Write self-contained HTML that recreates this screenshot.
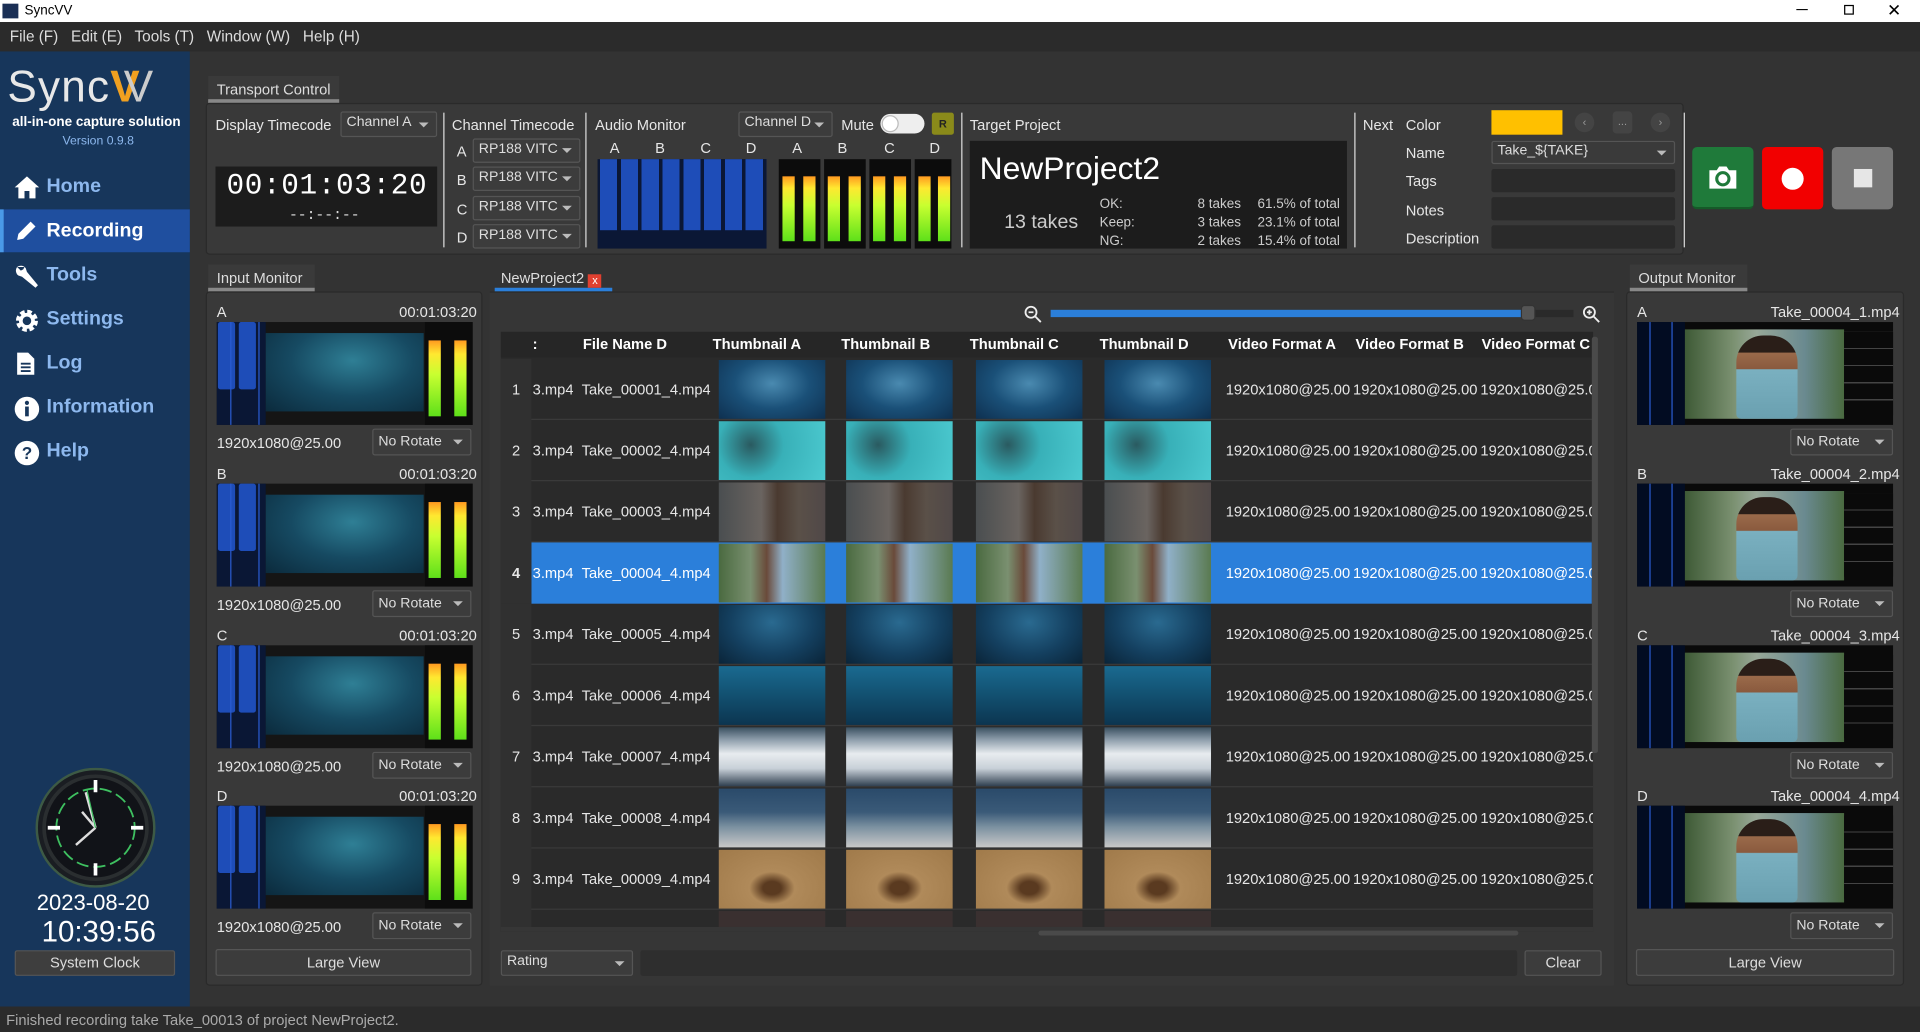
<!DOCTYPE html>
<html><head><meta charset="utf-8">
<style>
*{box-sizing:border-box;margin:0;padding:0}
html,body{width:1920px;height:1032px;overflow:hidden;background:#333}
#w{position:absolute;left:0;top:0;width:1568px;height:843px;transform:scale(1.22449);transform-origin:0 0;font-family:"Liberation Sans",sans-serif;font-size:12px;color:#e6e6e6;background:#333}
.a{position:absolute}
.t{position:absolute;white-space:nowrap}
.sel{position:absolute;background:#3c3c3c;border:1px solid #555;border-radius:2px;color:#ddd;padding:2px 4px;font-size:11.5px;white-space:nowrap;overflow:hidden}
.sel:after{content:"";position:absolute;right:6px;top:50%;margin-top:-2px;border:4px solid transparent;border-top:4px solid #bbb;border-bottom:0}
.btn{position:absolute;background:#3c3c3c;border:1px solid #555;border-radius:2px;text-align:center;color:#ddd}
.vl{position:absolute;width:1px;background:#ddd}
.panel{position:absolute;background:#393939;border:1px solid #2a2a2a;border-radius:3px}
.tab{position:absolute;background:#3a3a3a;color:#ddd;padding:4px 7px;font-size:12px;border-bottom:3px solid #888}
.nav{position:absolute;left:0;width:155px;height:36px;color:#8db8ee;font-weight:bold;font-size:16px;padding-left:38px;line-height:36px}
.nav svg{position:absolute;left:11px;top:8px}
.mon{position:absolute;width:209px;height:84px;background:#151515}
.mon .wf{position:absolute;left:0;top:0;width:40px;height:84px;background:#0a1735}
.mon .wf i{position:absolute;top:0;width:14px;height:55px;background:#1e4db8;border-radius:2px}
.mon .wf b{position:absolute;top:0;width:1px;height:84px;background:#2a5bd0}
.mon .vid{position:absolute;left:40px;top:9px;width:129px;height:64px;background:radial-gradient(ellipse at 55% 35%,#2f7f95,#164a62 50%,#0b2a3c)}
.mon .mt{position:absolute;left:170px;top:0;width:39px;height:84px;background:#0c0c0c}
.mon .mt i{position:absolute;top:15px;width:10px;height:62px;background:linear-gradient(#ff9a20,#ffe830 18%,#c8ff30 45%,#5ee01a)}
.om{position:absolute;width:209px;height:84px;background:#0a0a0a}
.om .l{position:absolute;left:0;top:0;width:39px;height:84px;background:#020c22}
.om .l b{position:absolute;width:1px;height:84px;background:#2a5bd0}
.om .m{position:absolute;left:169px;top:8px;width:40px;height:68px;background:repeating-linear-gradient(#0a0a0a 0 13px,#444 13px 14px)}
.om .img{position:absolute;left:39px;top:6px;width:130px;height:73px;background:linear-gradient(90deg,#3e5a36,#7a9070 30%,#98a898 45%,#6a8a90 75%,#4a6a40)}
.om .img:after{content:"";position:absolute;left:42px;top:5px;width:50px;height:68px;border-radius:22px 22px 4px 4px;background:linear-gradient(#2a1e18 20%,#9a6a4a 21%,#8a5a3e 40%,#7ab0c0 41%,#6aa0b0)}
.tbl{position:absolute;left:409px;top:271px;width:892px;height:490px;background:#2a2a2a;overflow:hidden}
.hd{position:absolute;top:0;height:21px;line-height:21px;font-weight:bold;color:#fff;font-size:12px}
.row{position:absolute;left:0;width:892px;height:50px;border-bottom:1px solid #3a3a3a}
.row .n{position:absolute;left:0;width:25px;height:50px;background:#303030;text-align:center;line-height:50px}
.row .c{position:absolute;top:0;height:50px;line-height:50px;font-size:12px;white-space:nowrap;overflow:hidden}
.row .th{position:absolute;top:1px;width:87px;height:48px}
.row.s .n{background:#303030;font-weight:bold}
.row.s .bg{position:absolute;left:25px;top:0;width:866px;height:50px;background:#2b7fda}
</style></head><body><div id="w">
<div class="a" style="left:0;top:0;width:1568px;height:18px;background:#fff"></div>
<div class="a" style="left:2px;top:3px;width:13px;height:12px;background:#1a2f55"></div>
<div class="t" style="left:20px;top:3px;color:#000;font-size:11px">SyncVV</div>
<div class="t" style="left:1467px;top:0;color:#000;font-size:13px">─</div>
<div class="a" style="left:1506px;top:4px;width:8px;height:8px;border:1px solid #000"></div>
<div class="t" style="left:1541px;top:0;color:#000;font-size:14px">✕</div>
<div class="a" style="left:0;top:18px;width:1568px;height:24px;background:#2b2b2b"></div>
<div class="t" style="left:8px;top:23px;font-size:12.5px;color:#ddd">File (F)&nbsp;&nbsp; Edit (E)&nbsp;&nbsp; Tools (T)&nbsp;&nbsp; Window (W)&nbsp;&nbsp; Help (H)</div>
<div class="a" style="left:0;top:42px;width:155px;height:780px;background:#17365b"></div>
<div class="t" style="left:6px;top:50px;font-size:36px;color:#e8e8e8;letter-spacing:1px">Sync<span style="color:#f0a020;font-weight:bold">V</span><span style="margin-left:-14px;color:#ccc">V</span></div>
<div class="t" style="left:10px;top:94px;font-size:11px;font-weight:bold;color:#fff">all-in-one capture solution</div>
<div class="t" style="left:51px;top:110px;font-size:10px;color:#8db8ee">Version 0.9.8</div>
<div class="a" style="left:0;top:171px;width:155px;height:35px;background:#1f4f9f"></div>
<div class="a" style="left:0;top:171px;width:3px;height:35px;background:#4a9ae8"></div>
<div class="nav" style="top:135px"><svg width="22" height="20" viewBox="0 0 22 20"><path d="M11 1 L21 10 H18 V19 H13 V13 H9 V19 H4 V10 H1 Z" fill="#fff"/></svg>Home</div>
<div class="nav" style="top:171px;color:#fff"><svg width="20" height="20" viewBox="0 0 20 20"><path d="M3 17 L4 12 L14 2 L18 6 L8 16 Z" fill="#fff"/></svg>Recording</div>
<div class="nav" style="top:207px"><svg width="22" height="22" viewBox="0 0 22 22"><path d="M3 3 a5 5 0 0 1 7 1 l1 3 l9 11 l-2 2 l-11 -9 l-3 -1 a5 5 0 0 1 -1 -7 l3 3 l2 -1 l1 -2 z" fill="#fff"/></svg>Tools</div>
<div class="nav" style="top:243px"><svg width="22" height="22" viewBox="0 0 22 22"><circle cx="11" cy="11" r="7" fill="none" stroke="#fff" stroke-width="4" stroke-dasharray="3.5 2"/><circle cx="11" cy="11" r="5" fill="none" stroke="#fff" stroke-width="3"/></svg>Settings</div>
<div class="nav" style="top:279px"><svg width="20" height="20" viewBox="0 0 20 20"><path d="M3 1 H12 L17 6 V19 H3 Z" fill="#fff"/><path d="M6 10 H14 M6 13 H14 M6 16 H14" stroke="#17365b" stroke-width="1.5"/></svg>Log</div>
<div class="nav" style="top:315px"><svg width="22" height="22" viewBox="0 0 22 22"><circle cx="11" cy="11" r="10" fill="#fff"/><rect x="9.5" y="9" width="3" height="8" fill="#17365b"/><circle cx="11" cy="6" r="1.7" fill="#17365b"/></svg>Information</div>
<div class="nav" style="top:351px"><svg width="22" height="22" viewBox="0 0 22 22"><circle cx="11" cy="11" r="10" fill="#fff"/><text x="11" y="16" text-anchor="middle" font-size="14" font-weight="bold" fill="#17365b" font-family="Liberation Sans">?</text></svg>Help</div>
<svg class="a" style="left:29px;top:627px" width="98" height="98" viewBox="0 0 98 98">
<circle cx="49" cy="49" r="48" fill="#1a1d22" stroke="#3d5a45" stroke-width="2"/>
<circle cx="49" cy="49" r="42" fill="#111318" stroke="#2a2e30" stroke-width="3"/>
<circle cx="49" cy="49" r="32" fill="none" stroke="#3ec060" stroke-width="1.5" stroke-dasharray="10 4"/>
<path d="M49 10 V20 M49 78 V88 M10 49 H20 M78 49 H88" stroke="#fff" stroke-width="3"/>
<path d="M49 49 L38 36 M49 49 L33 63 M49 49 L41 20" stroke="#ddd" stroke-width="2"/>
<path d="M49 49 L42 18" stroke="#3ec060" stroke-width="1"/>
</svg>
<div class="t" style="left:30px;top:727px;font-size:18px;color:#fff">2023-08-20</div>
<div class="t" style="left:34px;top:748px;font-size:24px;color:#fff">10:39:56</div>
<div class="btn" style="left:12px;top:776px;width:131px;height:21px;line-height:19px;background:#3e3e3e">System Clock</div>

<div class="tab" style="left:170px;top:62px;width:107px;height:22px">Transport Control</div>
<div class="panel" style="left:168px;top:84px;width:1207px;height:124px"></div>
<div class="t" style="left:176px;top:95px">Display Timecode</div>
<div class="sel" style="left:278px;top:91px;width:79px;height:21px">Channel A</div>
<div class="a" style="left:176px;top:136px;width:181px;height:49px;background:#1c1c1c"></div>
<div class="t" style="left:185px;top:139px;font-family:'Liberation Mono',monospace;font-size:24px;color:#fff;letter-spacing:0.5px">00:01:03:20</div>
<div class="t" style="left:236px;top:169px;font-family:'Liberation Mono',monospace;font-size:12px;color:#ddd">--:--:--</div>
<div class="vl" style="left:362px;top:92px;height:110px"></div>
<div class="t" style="left:369px;top:95px">Channel Timecode</div>
<div class="t" style="left:373px;top:117px">A</div><div class="sel" style="left:386px;top:113px;width:88px;height:20px">RP188 VITC</div>
<div class="t" style="left:373px;top:140px">B</div><div class="sel" style="left:386px;top:136px;width:88px;height:20px">RP188 VITC</div>
<div class="t" style="left:373px;top:164px">C</div><div class="sel" style="left:386px;top:160px;width:88px;height:20px">RP188 VITC</div>
<div class="t" style="left:373px;top:187px">D</div><div class="sel" style="left:386px;top:183px;width:88px;height:20px">RP188 VITC</div>
<div class="vl" style="left:478px;top:92px;height:110px"></div>
<div class="t" style="left:486px;top:95px">Audio Monitor</div>
<div class="sel" style="left:603px;top:91px;width:77px;height:21px">Channel D</div>
<div class="t" style="left:687px;top:95px">Mute</div>
<div class="a" style="left:719px;top:93px;width:36px;height:16px;border-radius:8px;background:#eee"></div>
<div class="a" style="left:720px;top:94px;width:14px;height:14px;border-radius:7px;background:#fff;border:1px solid #bbb"></div>
<div class="a" style="left:761px;top:92px;width:18px;height:18px;background:#8a8a1a;border-radius:2px;font-size:9px;font-weight:bold;color:#222;text-align:center;line-height:18px">R</div>
<div class="t" style="left:498px;top:114px">A</div><div class="t" style="left:535px;top:114px">B</div><div class="t" style="left:572px;top:114px">C</div><div class="t" style="left:609px;top:114px">D</div>
<div class="t" style="left:647px;top:114px">A</div><div class="t" style="left:684px;top:114px">B</div><div class="t" style="left:722px;top:114px">C</div><div class="t" style="left:759px;top:114px">D</div>
<div class="a" style="left:488px;top:130px;width:138px;height:73px;background:#0b1735"></div>
<div class="a" style="left:490px;top:130px;width:136px;height:58px;background:repeating-linear-gradient(90deg,#1e4db8 0 14px,#0b1735 14px 17px,#1e4db8 17px 31px,#0b1735 31px 34px)"></div>
<div class="a" style="left:636px;top:130px;width:34px;height:73px;background:#0c0c0c"></div>
<div class="a" style="left:673px;top:130px;width:34px;height:73px;background:#0c0c0c"></div>
<div class="a" style="left:710px;top:130px;width:34px;height:73px;background:#0c0c0c"></div>
<div class="a" style="left:747px;top:130px;width:30px;height:73px;background:#0c0c0c"></div>
<div class="a" style="left:639px;top:144px;width:10px;height:53px;background:linear-gradient(#ff9a20,#ffe830 18%,#c8ff30 45%,#5ee01a)"></div>
<div class="a" style="left:656px;top:144px;width:10px;height:53px;background:linear-gradient(#ff9a20,#ffe830 18%,#c8ff30 45%,#5ee01a)"></div>
<div class="a" style="left:676px;top:144px;width:10px;height:53px;background:linear-gradient(#ff9a20,#ffe830 18%,#c8ff30 45%,#5ee01a)"></div>
<div class="a" style="left:693px;top:144px;width:10px;height:53px;background:linear-gradient(#ff9a20,#ffe830 18%,#c8ff30 45%,#5ee01a)"></div>
<div class="a" style="left:713px;top:144px;width:10px;height:53px;background:linear-gradient(#ff9a20,#ffe830 18%,#c8ff30 45%,#5ee01a)"></div>
<div class="a" style="left:730px;top:144px;width:10px;height:53px;background:linear-gradient(#ff9a20,#ffe830 18%,#c8ff30 45%,#5ee01a)"></div>
<div class="a" style="left:750px;top:144px;width:10px;height:53px;background:linear-gradient(#ff9a20,#ffe830 18%,#c8ff30 45%,#5ee01a)"></div>
<div class="a" style="left:766px;top:144px;width:10px;height:53px;background:linear-gradient(#ff9a20,#ffe830 18%,#c8ff30 45%,#5ee01a)"></div>
<div class="vl" style="left:785px;top:92px;height:110px"></div>
<div class="t" style="left:792px;top:95px">Target Project</div>
<div class="a" style="left:792px;top:115px;width:308px;height:88px;background:#1c1c1c"></div>
<div class="t" style="left:800px;top:122px;font-size:26px;color:#fff">NewProject2</div>
<div class="t" style="left:820px;top:173px;font-size:16px;color:#ccc">13 takes</div>
<div class="t" style="left:898px;top:160px;font-size:11px;color:#ccc;line-height:15px">OK:<br>Keep:<br>NG:</div>
<div class="t" style="left:978px;top:160px;font-size:11px;color:#ccc;line-height:15px">8 takes<br>3 takes<br>2 takes</div>
<div class="t" style="left:1027px;top:160px;font-size:11px;color:#ccc;line-height:15px">61.5% of total<br>23.1% of total<br>15.4% of total</div>
<div class="vl" style="left:1106px;top:92px;height:110px"></div>
<div class="t" style="left:1113px;top:95px">Next</div>
<div class="t" style="left:1148px;top:95px">Color</div>
<div class="t" style="left:1148px;top:118px">Name</div>
<div class="t" style="left:1148px;top:141px">Tags</div>
<div class="t" style="left:1148px;top:165px">Notes</div>
<div class="t" style="left:1148px;top:188px">Description</div>
<div class="a" style="left:1218px;top:90px;width:58px;height:20px;background:#ffc000"></div>
<div class="a" style="left:1286px;top:92px;width:16px;height:16px;border-radius:8px;background:#444;color:#999;font-size:9px;text-align:center;line-height:16px">‹</div>
<div class="a" style="left:1317px;top:91px;width:16px;height:18px;border-radius:3px;background:#444;color:#999;font-size:9px;text-align:center;line-height:16px">...</div>
<div class="a" style="left:1348px;top:92px;width:16px;height:16px;border-radius:8px;background:#444;color:#999;font-size:9px;text-align:center;line-height:16px">›</div>
<div class="sel" style="left:1218px;top:115px;width:150px;height:19px;background:#3a3a3a;padding-top:1px">Take_${TAKE}</div>
<div class="a" style="left:1218px;top:138px;width:150px;height:19px;background:#2a2a2a;border-radius:2px"></div>
<div class="a" style="left:1218px;top:161px;width:150px;height:19px;background:#2a2a2a;border-radius:2px"></div>
<div class="a" style="left:1218px;top:184px;width:150px;height:19px;background:#2a2a2a;border-radius:2px"></div>
<div class="vl" style="left:1375px;top:92px;height:110px"></div>
<div class="a" style="left:1382px;top:120px;width:50px;height:51px;background:#1f7a3a;border-radius:4px;border-bottom:2px solid #155a28"></div>
<svg class="a" style="left:1394px;top:134px" width="26" height="22" viewBox="0 0 26 22"><path d="M2 5 H8 L10 2 H16 L18 5 H24 V20 H2 Z" fill="#fff"/><circle cx="13" cy="12" r="5" fill="none" stroke="#1f7a3a" stroke-width="2.5"/></svg>
<div class="a" style="left:1439px;top:120px;width:50px;height:51px;background:#f20000;border-radius:4px"></div>
<div class="a" style="left:1455px;top:137px;width:18px;height:18px;border-radius:9px;background:#fff"></div>
<div class="a" style="left:1496px;top:120px;width:50px;height:51px;background:#777;border-radius:4px"></div>
<div class="a" style="left:1514px;top:138px;width:15px;height:15px;background:#e6e6e6"></div>

<div class="tab" style="left:170px;top:216px;width:87px;height:22px">Input Monitor</div>
<div class="panel" style="left:168px;top:238px;width:226px;height:567px"></div>
<div class="t" style="left:177px;top:248px">A</div><div class="t" style="left:326px;top:248px">00:01:03:20</div>
<div class="mon" style="left:177px;top:263px"><div class="wf"><i style="left:1px"></i><i style="left:18px"></i><b style="left:11px"></b><b style="left:34px"></b></div><div class="vid"></div><div class="mt"><i style="left:3px"></i><i style="left:24px"></i></div></div>
<div class="t" style="left:177px;top:355px">1920x1080@25.00</div><div class="sel" style="left:304px;top:350px;width:81px;height:22px;line-height:16px">No Rotate</div>
<div class="t" style="left:177px;top:380px">B</div><div class="t" style="left:326px;top:380px">00:01:03:20</div>
<div class="mon" style="left:177px;top:395px"><div class="wf"><i style="left:1px"></i><i style="left:18px"></i><b style="left:11px"></b><b style="left:34px"></b></div><div class="vid"></div><div class="mt"><i style="left:3px"></i><i style="left:24px"></i></div></div>
<div class="t" style="left:177px;top:487px">1920x1080@25.00</div><div class="sel" style="left:304px;top:482px;width:81px;height:22px;line-height:16px">No Rotate</div>
<div class="t" style="left:177px;top:512px">C</div><div class="t" style="left:326px;top:512px">00:01:03:20</div>
<div class="mon" style="left:177px;top:527px"><div class="wf"><i style="left:1px"></i><i style="left:18px"></i><b style="left:11px"></b><b style="left:34px"></b></div><div class="vid"></div><div class="mt"><i style="left:3px"></i><i style="left:24px"></i></div></div>
<div class="t" style="left:177px;top:619px">1920x1080@25.00</div><div class="sel" style="left:304px;top:614px;width:81px;height:22px;line-height:16px">No Rotate</div>
<div class="t" style="left:177px;top:643px">D</div><div class="t" style="left:326px;top:643px">00:01:03:20</div>
<div class="mon" style="left:177px;top:658px"><div class="wf"><i style="left:1px"></i><i style="left:18px"></i><b style="left:11px"></b><b style="left:34px"></b></div><div class="vid"></div><div class="mt"><i style="left:3px"></i><i style="left:24px"></i></div></div>
<div class="t" style="left:177px;top:750px">1920x1080@25.00</div><div class="sel" style="left:304px;top:745px;width:81px;height:22px;line-height:16px">No Rotate</div>
<div class="btn" style="left:176px;top:775px;width:209px;height:22px;line-height:20px">Large View</div>

<div class="a" style="left:404px;top:216px;width:96px;height:22px;color:#ddd;padding:4px 5px;border-bottom:3px solid #2b7fda">NewProject2 <span style="display:inline-block;width:11px;height:11px;background:#e04030;color:#fff;font-size:9px;line-height:11px;text-align:center;vertical-align:-1px">x</span></div>
<div class="a" style="left:400px;top:238px;width:918px;height:567px;background:#363636;border-top:1px solid #2a2a2a"></div>
<svg class="a" style="left:836px;top:249px" width="16" height="16" viewBox="0 0 16 16"><circle cx="6" cy="6" r="4.5" fill="none" stroke="#eee" stroke-width="1.5"/><path d="M9.5 9.5 L14 14 M4 6 H8" stroke="#eee" stroke-width="1.5"/></svg>
<div class="a" style="left:858px;top:253px;width:427px;height:6px;background:#2a2a2a"></div>
<div class="a" style="left:858px;top:253px;width:390px;height:6px;background:#2b7fda"></div>
<div class="a" style="left:1242px;top:249px;width:12px;height:13px;background:#555;border-radius:3px;border:1px solid #333"></div>
<svg class="a" style="left:1292px;top:249px" width="16" height="16" viewBox="0 0 16 16"><circle cx="6" cy="6" r="4.5" fill="none" stroke="#eee" stroke-width="1.5"/><path d="M9.5 9.5 L14 14 M4 6 H8 M6 4 V8" stroke="#eee" stroke-width="1.5"/></svg>

<div class="tbl">
<div class="a" style="left:0;top:0;width:892px;height:21px;background:#262626"></div>
<div class="hd" style="left:26px">:</div>
<div class="hd" style="left:67px">File Name D</div>
<div class="hd" style="left:173px">Thumbnail A</div>
<div class="hd" style="left:278px">Thumbnail B</div>
<div class="hd" style="left:383px">Thumbnail C</div>
<div class="hd" style="left:489px">Thumbnail D</div>
<div class="hd" style="left:594px">Video Format A</div>
<div class="hd" style="left:698px">Video Format B</div>
<div class="hd" style="left:801px">Video Format C</div>

<div class="row" style="top:22px"><div class="n">1</div><div class="c" style="left:26px">3.mp4</div><div class="c" style="left:66px">Take_00001_4.mp4</div><div class="th" style="left:178px;background:radial-gradient(ellipse at 50% 40%,#4a8ab0,#1a5078 50%,#0e3050)"></div><div class="th" style="left:282px;background:radial-gradient(ellipse at 50% 40%,#4a8ab0,#1a5078 50%,#0e3050)"></div><div class="th" style="left:388px;background:radial-gradient(ellipse at 50% 40%,#4a8ab0,#1a5078 50%,#0e3050)"></div><div class="th" style="left:493px;background:radial-gradient(ellipse at 50% 40%,#4a8ab0,#1a5078 50%,#0e3050)"></div><div class="c" style="left:592px">1920x1080@25.00</div><div class="c" style="left:696px">1920x1080@25.00</div><div class="c" style="left:800px;width:92px">1920x1080@25.00</div></div>
<div class="row" style="top:72px"><div class="n">2</div><div class="c" style="left:26px">3.mp4</div><div class="c" style="left:66px">Take_00002_4.mp4</div><div class="th" style="left:178px;background:radial-gradient(circle at 30% 40%,#2a5a60,#38b0b8 40%,#4ccad0)"></div><div class="th" style="left:282px;background:radial-gradient(circle at 30% 40%,#2a5a60,#38b0b8 40%,#4ccad0)"></div><div class="th" style="left:388px;background:radial-gradient(circle at 30% 40%,#2a5a60,#38b0b8 40%,#4ccad0)"></div><div class="th" style="left:493px;background:radial-gradient(circle at 30% 40%,#2a5a60,#38b0b8 40%,#4ccad0)"></div><div class="c" style="left:592px">1920x1080@25.00</div><div class="c" style="left:696px">1920x1080@25.00</div><div class="c" style="left:800px;width:92px">1920x1080@25.00</div></div>
<div class="row" style="top:122px"><div class="n">3</div><div class="c" style="left:26px">3.mp4</div><div class="c" style="left:66px">Take_00003_4.mp4</div><div class="th" style="left:178px;background:linear-gradient(90deg,#4a4e50,#6a6460 40%,#4a3a30 55%,#5a5048 75%,#504848)"></div><div class="th" style="left:282px;background:linear-gradient(90deg,#4a4e50,#6a6460 40%,#4a3a30 55%,#5a5048 75%,#504848)"></div><div class="th" style="left:388px;background:linear-gradient(90deg,#4a4e50,#6a6460 40%,#4a3a30 55%,#5a5048 75%,#504848)"></div><div class="th" style="left:493px;background:linear-gradient(90deg,#4a4e50,#6a6460 40%,#4a3a30 55%,#5a5048 75%,#504848)"></div><div class="c" style="left:592px">1920x1080@25.00</div><div class="c" style="left:696px">1920x1080@25.00</div><div class="c" style="left:800px;width:92px">1920x1080@25.00</div></div>
<div class="row s" style="top:172px"><div class="bg"></div><div class="n">4</div><div class="c" style="left:26px;color:#fff">3.mp4</div><div class="c" style="left:66px;color:#fff">Take_00004_4.mp4</div><div class="th" style="left:178px;background:linear-gradient(90deg,#4a6a40,#7a9070 30%,#6a4a3a 45%,#90b0c8 60%,#5a7a50)"></div><div class="th" style="left:282px;background:linear-gradient(90deg,#4a6a40,#7a9070 30%,#6a4a3a 45%,#90b0c8 60%,#5a7a50)"></div><div class="th" style="left:388px;background:linear-gradient(90deg,#4a6a40,#7a9070 30%,#6a4a3a 45%,#90b0c8 60%,#5a7a50)"></div><div class="th" style="left:493px;background:linear-gradient(90deg,#4a6a40,#7a9070 30%,#6a4a3a 45%,#90b0c8 60%,#5a7a50)"></div><div class="c" style="left:592px;color:#fff">1920x1080@25.00</div><div class="c" style="left:696px;color:#fff">1920x1080@25.00</div><div class="c" style="left:800px;width:92px;color:#fff">1920x1080@25.00</div></div>
<div class="row" style="top:222px"><div class="n">5</div><div class="c" style="left:26px">3.mp4</div><div class="c" style="left:66px">Take_00005_4.mp4</div><div class="th" style="left:178px;background:radial-gradient(ellipse at 50% 30%,#2a6a90,#144060 55%,#0a2438)"></div><div class="th" style="left:282px;background:radial-gradient(ellipse at 50% 30%,#2a6a90,#144060 55%,#0a2438)"></div><div class="th" style="left:388px;background:radial-gradient(ellipse at 50% 30%,#2a6a90,#144060 55%,#0a2438)"></div><div class="th" style="left:493px;background:radial-gradient(ellipse at 50% 30%,#2a6a90,#144060 55%,#0a2438)"></div><div class="c" style="left:592px">1920x1080@25.00</div><div class="c" style="left:696px">1920x1080@25.00</div><div class="c" style="left:800px;width:92px">1920x1080@25.00</div></div>
<div class="row" style="top:272px"><div class="n">6</div><div class="c" style="left:26px">3.mp4</div><div class="c" style="left:66px">Take_00006_4.mp4</div><div class="th" style="left:178px;background:linear-gradient(#1a6a90,#125070 50%,#0c3550)"></div><div class="th" style="left:282px;background:linear-gradient(#1a6a90,#125070 50%,#0c3550)"></div><div class="th" style="left:388px;background:linear-gradient(#1a6a90,#125070 50%,#0c3550)"></div><div class="th" style="left:493px;background:linear-gradient(#1a6a90,#125070 50%,#0c3550)"></div><div class="c" style="left:592px">1920x1080@25.00</div><div class="c" style="left:696px">1920x1080@25.00</div><div class="c" style="left:800px;width:92px">1920x1080@25.00</div></div>
<div class="row" style="top:322px"><div class="n">7</div><div class="c" style="left:26px">3.mp4</div><div class="c" style="left:66px">Take_00007_4.mp4</div><div class="th" style="left:178px;background:linear-gradient(#3a5060,#8a9aa8 20%,#e8ecef 45%,#c8d0d8 70%,#304050)"></div><div class="th" style="left:282px;background:linear-gradient(#3a5060,#8a9aa8 20%,#e8ecef 45%,#c8d0d8 70%,#304050)"></div><div class="th" style="left:388px;background:linear-gradient(#3a5060,#8a9aa8 20%,#e8ecef 45%,#c8d0d8 70%,#304050)"></div><div class="th" style="left:493px;background:linear-gradient(#3a5060,#8a9aa8 20%,#e8ecef 45%,#c8d0d8 70%,#304050)"></div><div class="c" style="left:592px">1920x1080@25.00</div><div class="c" style="left:696px">1920x1080@25.00</div><div class="c" style="left:800px;width:92px">1920x1080@25.00</div></div>
<div class="row" style="top:372px"><div class="n">8</div><div class="c" style="left:26px">3.mp4</div><div class="c" style="left:66px">Take_00008_4.mp4</div><div class="th" style="left:178px;background:linear-gradient(#2a4a6a,#3a5a78 40%,#7a90a0 65%,#c8c8c8)"></div><div class="th" style="left:282px;background:linear-gradient(#2a4a6a,#3a5a78 40%,#7a90a0 65%,#c8c8c8)"></div><div class="th" style="left:388px;background:linear-gradient(#2a4a6a,#3a5a78 40%,#7a90a0 65%,#c8c8c8)"></div><div class="th" style="left:493px;background:linear-gradient(#2a4a6a,#3a5a78 40%,#7a90a0 65%,#c8c8c8)"></div><div class="c" style="left:592px">1920x1080@25.00</div><div class="c" style="left:696px">1920x1080@25.00</div><div class="c" style="left:800px;width:92px">1920x1080@25.00</div></div>
<div class="row" style="top:422px"><div class="n">9</div><div class="c" style="left:26px">3.mp4</div><div class="c" style="left:66px">Take_00009_4.mp4</div><div class="th" style="left:178px;background:radial-gradient(ellipse at 50% 65%,#5a3a20 12%,#b08a5a 30%,#a07a4a)"></div><div class="th" style="left:282px;background:radial-gradient(ellipse at 50% 65%,#5a3a20 12%,#b08a5a 30%,#a07a4a)"></div><div class="th" style="left:388px;background:radial-gradient(ellipse at 50% 65%,#5a3a20 12%,#b08a5a 30%,#a07a4a)"></div><div class="th" style="left:493px;background:radial-gradient(ellipse at 50% 65%,#5a3a20 12%,#b08a5a 30%,#a07a4a)"></div><div class="c" style="left:592px">1920x1080@25.00</div><div class="c" style="left:696px">1920x1080@25.00</div><div class="c" style="left:800px;width:92px">1920x1080@25.00</div></div>
<div class="row" style="top:472px;height:14px;border:0"><div class="n" style="height:14px"></div><div class="th" style="left:178px;height:14px;background:#3a3030"></div><div class="th" style="left:282px;height:14px;background:#3a3030"></div><div class="th" style="left:388px;height:14px;background:#3a3030"></div><div class="th" style="left:493px;height:14px;background:#3a3030"></div></div>
<div class="a" style="left:0;top:486px;width:892px;height:4px;background:#363636"></div>
</div>
<div class="a" style="left:1300px;top:275px;width:5px;height:340px;background:#4a4a4a;border-radius:2px"></div>
<div class="a" style="left:848px;top:760px;width:392px;height:4px;background:#4a4a4a;border-radius:2px"></div>
<div class="sel" style="left:409px;top:776px;width:108px;height:21px">Rating</div>
<div class="a" style="left:523px;top:776px;width:716px;height:21px;background:#2e2e2e;border-radius:2px"></div>
<div class="btn" style="left:1245px;top:776px;width:63px;height:21px;line-height:19px">Clear</div>

<div class="tab" style="left:1331px;top:216px;width:96px;height:22px">Output Monitor</div>
<div class="panel" style="left:1328px;top:238px;width:227px;height:567px"></div>
<div class="t" style="left:1337px;top:248px">A</div><div class="t" style="left:1446px;top:248px">Take_00004_1.mp4</div>
<div class="om" style="left:1337px;top:263px"><div class="l"><b style="left:10px"></b><b style="left:28px"></b></div><div class="img"></div><div class="m"></div></div>
<div class="sel" style="left:1462px;top:350px;width:84px;height:22px;line-height:16px">No Rotate</div>
<div class="t" style="left:1337px;top:380px">B</div><div class="t" style="left:1446px;top:380px">Take_00004_2.mp4</div>
<div class="om" style="left:1337px;top:395px"><div class="l"><b style="left:10px"></b><b style="left:28px"></b></div><div class="img"></div><div class="m"></div></div>
<div class="sel" style="left:1462px;top:482px;width:84px;height:22px;line-height:16px">No Rotate</div>
<div class="t" style="left:1337px;top:512px">C</div><div class="t" style="left:1446px;top:512px">Take_00004_3.mp4</div>
<div class="om" style="left:1337px;top:527px"><div class="l"><b style="left:10px"></b><b style="left:28px"></b></div><div class="img"></div><div class="m"></div></div>
<div class="sel" style="left:1462px;top:614px;width:84px;height:22px;line-height:16px">No Rotate</div>
<div class="t" style="left:1337px;top:643px">D</div><div class="t" style="left:1446px;top:643px">Take_00004_4.mp4</div>
<div class="om" style="left:1337px;top:658px"><div class="l"><b style="left:10px"></b><b style="left:28px"></b></div><div class="img"></div><div class="m"></div></div>
<div class="sel" style="left:1462px;top:745px;width:84px;height:22px;line-height:16px">No Rotate</div>
<div class="btn" style="left:1336px;top:775px;width:211px;height:22px;line-height:20px">Large View</div>

<div class="a" style="left:0;top:822px;width:1568px;height:21px;background:#2b2b2b"></div>
<div class="t" style="left:5px;top:826px;color:#aaa;font-size:12px">Finished recording take Take_00013 of project NewProject2.</div>
</div></body></html>
